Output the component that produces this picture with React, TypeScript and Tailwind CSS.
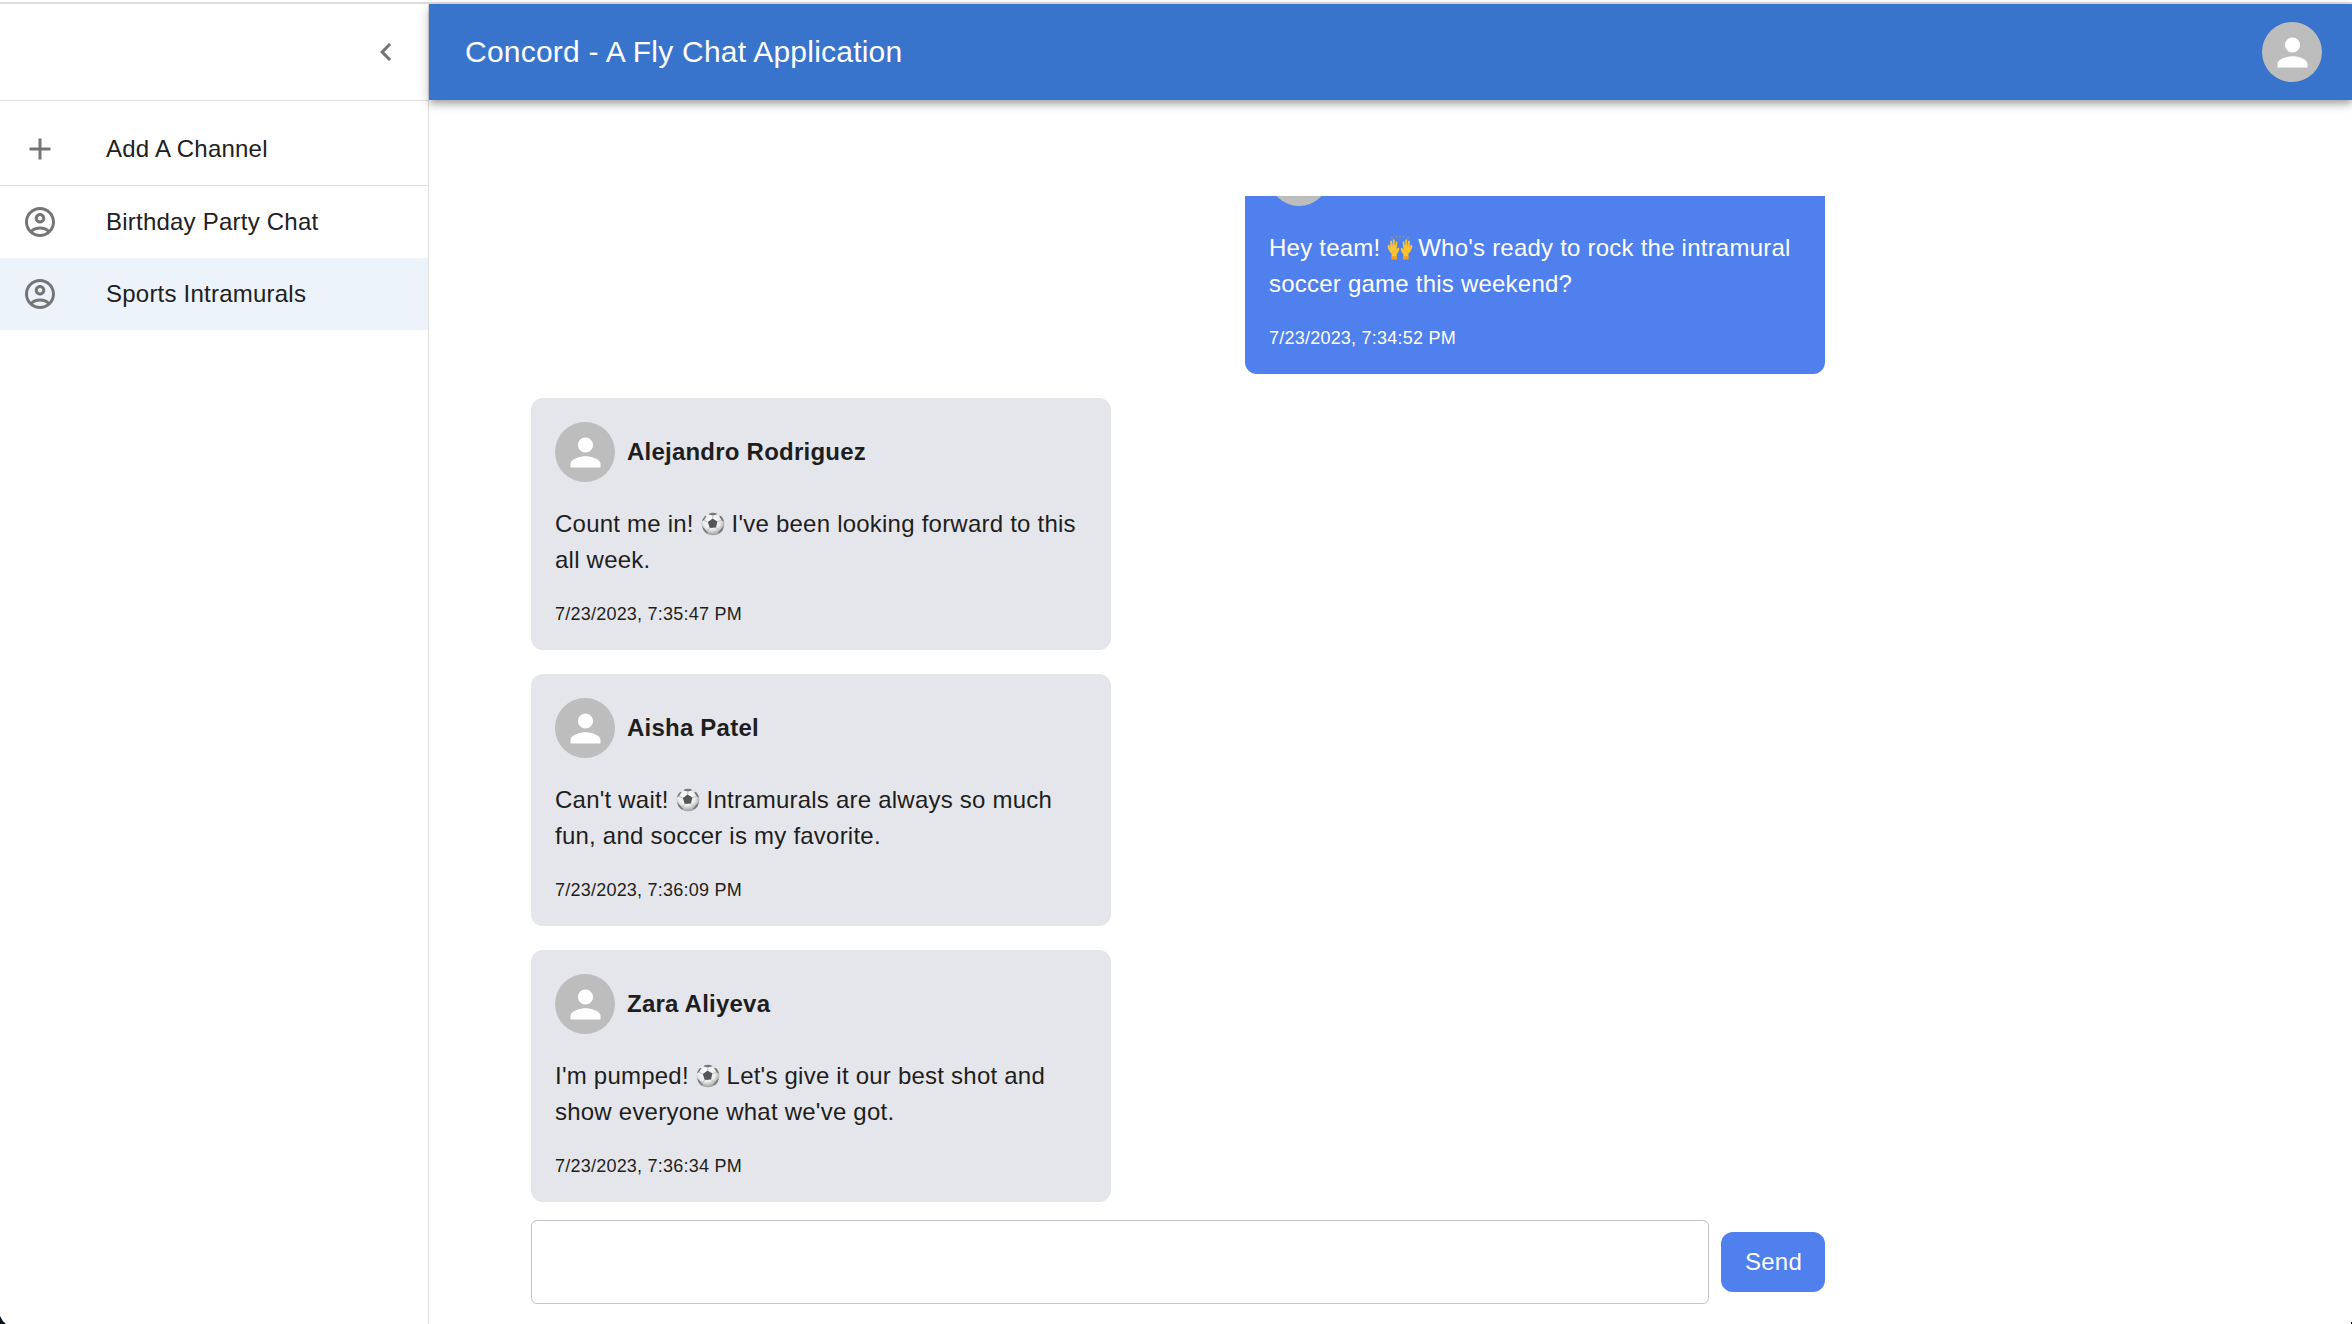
import type { ReactNode } from "react";

function PersonIcon() {
  return (
    <svg viewBox="0 0 24 24" className="h-[45px] w-[45px] fill-white">
      <path d="M12 12c2.21 0 4-1.79 4-4s-1.79-4-4-4-4 1.79-4 4 1.79 4 4 4zm0 2c-2.67 0-8 1.34-8 4v2h16v-2c0-2.66-5.33-4-8-4z" />
    </svg>
  );
}

function Avatar() {
  return (
    <div className="flex h-[60px] w-[60px] shrink-0 items-center justify-center rounded-full bg-[#bdbdbd]">
      <PersonIcon />
    </div>
  );
}

function AccountCircle() {
  return (
    <svg viewBox="0 0 24 24" className="h-9 w-9 shrink-0 fill-[#757575]">
      <path d="M12 2C6.48 2 2 6.48 2 12s4.48 10 10 10 10-4.48 10-10S17.52 2 12 2zM7.35 18.5C8.66 17.56 10.26 17 12 17s3.34.56 4.65 1.5c-1.31.94-2.91 1.5-4.65 1.5s-3.34-.56-4.65-1.5zm10.79-1.38C16.45 15.8 14.32 15 12 15s-4.45.8-6.14 2.12C4.7 15.73 4 13.95 4 12c0-4.42 3.58-8 8-8s8 3.58 8 8c0 1.95-.7 3.73-1.86 5.12z" />
      <path d="M12 6c-1.93 0-3.5 1.57-3.5 3.5S10.07 13 12 13s3.5-1.57 3.5-3.5S13.93 6 12 6zm0 5c-.83 0-1.5-.67-1.5-1.5S11.17 8 12 8s1.5.67 1.5 1.5S12.83 11 12 11z" />
    </svg>
  );
}

function SoccerBall() {
  return (
    <svg viewBox="0 0 24 24" role="img" aria-label="soccer ball" className="inline-block h-6 w-6 align-[-4px]">
      <defs>
        <radialGradient id="ball" cx="45%" cy="38%" r="62%">
          <stop offset="0" stopColor="#ffffff" />
          <stop offset="0.6" stopColor="#ececec" />
          <stop offset="1" stopColor="#9c9c9e" />
        </radialGradient>
        <clipPath id="ballClip"><circle cx="12" cy="12" r="11.3" /></clipPath>
      </defs>
      <circle cx="12" cy="12" r="11.3" fill="url(#ball)" />
      <g clipPath="url(#ballClip)">
        <path d="M11.6 6.6 16.4 9.6 15 15.4 8.8 15.9 6.8 10.1Z" fill="#55565a" />
        <path d="M7.5 2.6 12 3.4 16.4 2.2 14 0H9ZM0 9.5 3 8.2 5.6 4.1 2 3ZM24 10 20.8 8.4 18.2 4.3 22.6 3.5ZM1 14 4.7 18 7.4 21.2 3 22.5ZM22.8 14 19.2 18 16.8 21 21.2 22.5Z" fill="#77787b" />
        <path d="M11.6 6.6 12 3.4M16.4 9.6 20.8 8.4M15 15.4 18.2 18.8M8.8 15.9 6 19.5M6.8 10.1 3 8.2" stroke="#b4b4b6" strokeWidth="0.8" fill="none" />
      </g>
    </svg>
  );
}

function RaisedHands() {
  return (
    <svg viewBox="0 0 26 25" role="img" aria-label="raised hands" className="-mr-0.5 inline-block h-[25px] w-[26px] align-[-4px]">
      <path d="M4.5 2.2 5.8 4M9.3.8 10 2.6M13 .5v1.8M16.7.8 16 2.6M21.5 2.2 20.2 4" stroke="#8f927f" strokeWidth="1.3" strokeLinecap="round" />
      <path d="M4.6 24.3V18.8C2.5 16.8.6 13.8.7 10.6c0-1 1.5-1.2 1.9 0l.8 2.4-.2-6.6c0-1.2 1.5-1.3 1.8 0l.5 5 .4-6.2c.1-1.2 1.7-1.2 1.8 0l.1 6.3 1-4.6c.3-1.1 1.6-.8 1.5.4l-.7 7.4c.5-1 1.2-2 2.1-1.8.9.3.5 1.3.2 2.2-.5 1.8-1 3.2-2.2 4.1v5.1Z" fill="#fdc32e" />
      <path d="M4.6 24.3v-3.1h5.1v3.1Z" fill="#ee9f1b" />
      <g transform="matrix(-1 0 0 1 26 0)">
        <path d="M4.6 24.3V18.8C2.5 16.8.6 13.8.7 10.6c0-1 1.5-1.2 1.9 0l.8 2.4-.2-6.6c0-1.2 1.5-1.3 1.8 0l.5 5 .4-6.2c.1-1.2 1.7-1.2 1.8 0l.1 6.3 1-4.6c.3-1.1 1.6-.8 1.5.4l-.7 7.4c.5-1 1.2-2 2.1-1.8.9.3.5 1.3.2 2.2-.5 1.8-1 3.2-2.2 4.1v5.1Z" fill="#fdc32e" />
        <path d="M4.6 24.3v-3.1h5.1v3.1Z" fill="#ee9f1b" />
      </g>
    </svg>
  );
}

function Message({ name, time, own = false, children }: { name?: string; time: string; own?: boolean; children: ReactNode }) {
  return (
    <article
      className={
        own
          ? "flex w-[580px] shrink-0 flex-col gap-6 self-end rounded-xl bg-[#4f80ee] p-6 text-white"
          : "flex w-[580px] shrink-0 flex-col gap-6 rounded-xl bg-[#e5e6eb] p-6 text-[#1e1e20]"
      }
    >
      <div className="flex items-center gap-3">
        <Avatar />
        {name && <span className="text-2xl font-bold tracking-[0.225px]">{name}</span>}
      </div>
      <p className="whitespace-nowrap text-2xl leading-9 tracking-[0.225px]">{children}</p>
      <time className="text-lg leading-6 tracking-[0.225px]">{time}</time>
    </article>
  );
}

function Channel({ name, selected = false }: { name: string; selected?: boolean }) {
  return (
    <div className={selected ? "flex h-[72px] items-center bg-[#edf3fb] pl-[22px]" : "flex h-[72px] items-center pl-[22px]"}>
      <AccountCircle />
      <span className="ml-12 text-2xl tracking-[0.225px]">{name}</span>
    </div>
  );
}

export default function App() {
  return (
    <div className="relative flex h-[1324px] w-[2352px] flex-col overflow-hidden bg-white pt-0.5 font-['Liberation_Sans',Arial,sans-serif] text-[#212121]">
      <div className="h-0.5 shrink-0 bg-[#dddddd]" />
      <div className="flex min-h-0 flex-1">
        <aside className="w-[429px] shrink-0 border-r border-[#dfdfdf]">
          <div className="flex h-[97px] items-center justify-end border-b border-[#dfdfdf] pr-6">
            <svg viewBox="0 0 24 24" className="h-9 w-9 fill-[#757575]">
              <path d="M15.41 7.41 14 6l-6 6 6 6 1.41-1.41L10.83 12z" />
            </svg>
          </div>
          <div className="flex h-[85px] items-center border-b border-[#dfdfdf] pt-3 pl-[22px]">
            <svg viewBox="0 0 24 24" className="h-9 w-9 shrink-0 fill-[#757575]">
              <path d="M19 13h-6v6h-2v-6H5v-2h6V5h2v6h6v2z" />
            </svg>
            <span className="ml-12 text-2xl tracking-[0.225px]">Add A Channel</span>
          </div>
          <Channel name="Birthday Party Chat" />
          <Channel name="Sports Intramurals" selected />
        </aside>
        <div className="flex min-w-0 flex-1 flex-col">
          <header className="flex h-24 shrink-0 items-center justify-between bg-[#3874cb] pr-[30px] pl-9 text-white shadow-[0_3px_6px_-1.5px_rgba(0,0,0,0.2),0_6px_7.5px_0_rgba(0,0,0,0.14),0_1.5px_15px_0_rgba(0,0,0,0.12)]">
            <h1 className="pb-0.5 text-[30px] tracking-[0.225px]">Concord - A Fly Chat Application</h1>
            <Avatar />
          </header>
          <main className="mt-24 ml-[102px] w-[1294px]">
            <div className="flex h-[1006px] flex-col justify-end gap-6 overflow-hidden">
              <Message own time="7/23/2023, 7:34:52 PM">
                Hey team! <RaisedHands /> Who's ready to rock the intramural
                <br />
                soccer game this weekend?
              </Message>
              <Message name="Alejandro Rodriguez" time="7/23/2023, 7:35:47 PM">
                Count me in! <SoccerBall /> I've been looking forward to this
                <br />
                all week.
              </Message>
              <Message name="Aisha Patel" time="7/23/2023, 7:36:09 PM">
                Can't wait! <SoccerBall /> Intramurals are always so much
                <br />
                fun, and soccer is my favorite.
              </Message>
              <Message name="Zara Aliyeva" time="7/23/2023, 7:36:34 PM">
                I'm pumped! <SoccerBall /> Let's give it our best shot and
                <br />
                show everyone what we've got.
              </Message>
            </div>
            <form className="mt-[18px] flex items-center gap-3">
              <input aria-label="Message" className="h-[84px] w-[1178px] rounded-md border border-[#c4c4c4] bg-white px-5 text-2xl outline-none" />
              <button type="button" className="h-[60px] w-[104px] rounded-xl bg-[#4f80ee] pl-px text-2xl tracking-[0.225px] text-white">
                Send
              </button>
            </form>
          </main>
        </div>
      </div>
      <svg viewBox="0 0 6 8" className="absolute bottom-0 left-0 h-2 w-1.5 fill-[#06121c]">
        <path d="M0 0Q2 5 6 8H0Z" />
      </svg>
      <div className="absolute right-0 bottom-0 h-0.5 w-px bg-black" />
    </div>
  );
}
